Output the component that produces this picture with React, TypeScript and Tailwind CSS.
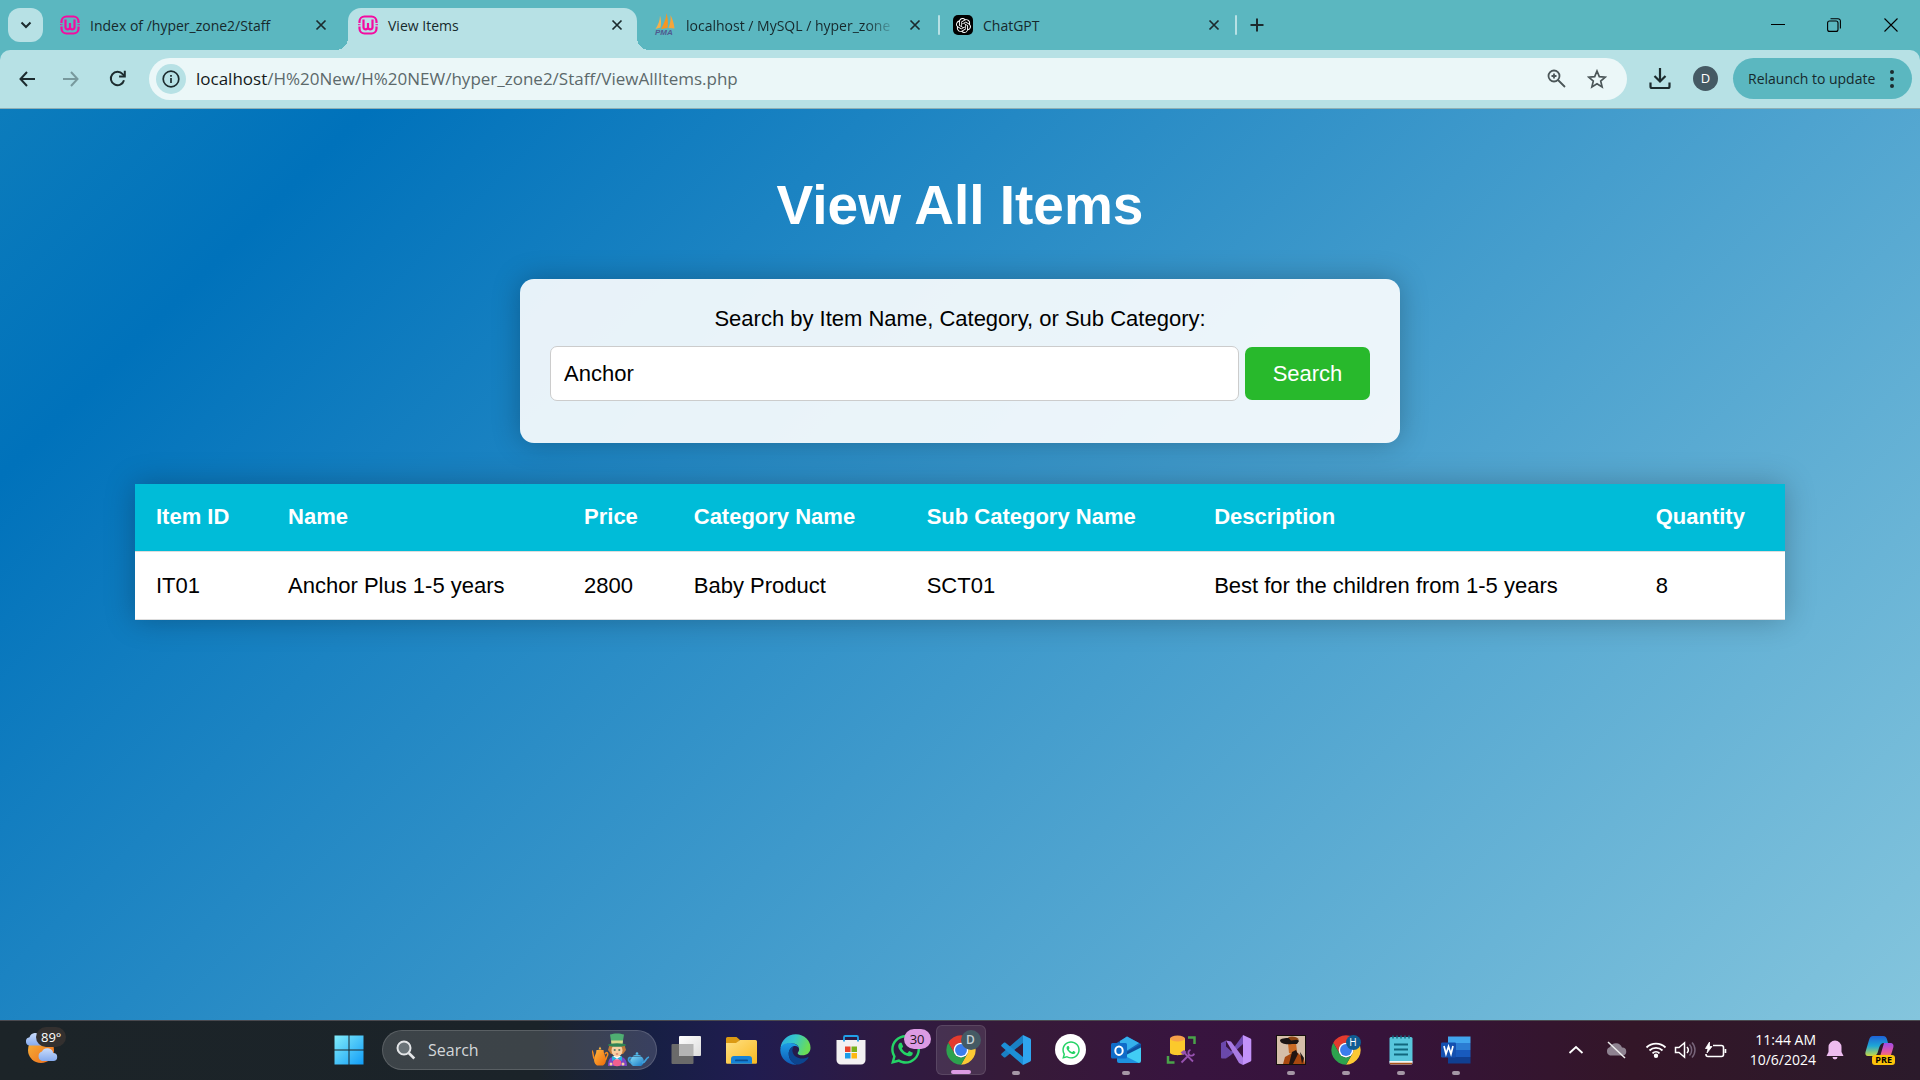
import React from "react";
import { FaWhatsapp } from "react-icons/fa";
import { SiOpenai } from "react-icons/si";

const UI = "font-['Open_Sans','Noto_Sans',sans-serif]";

function WampIcon() {
  return (
    <svg viewBox="0 0 20 20" className="size-5 shrink-0" fill="none" stroke="#f30ca0" strokeWidth="2.200">
      <path d="M1.500 8V6.500a5 5 0 0 1 5-5h7a5 5 0 0 1 5 5V8M1.500 11.500v2a5 5 0 0 0 5 5h7a5 5 0 0 0 5-5v-2" />
      <path d="M5.500 4.500v8a2.300 2.300 0 0 0 4.500 0V8M14.500 4.500v8a2.300 2.300 0 0 1-4.500 0" />
      <path d="M0 9.700h2.500M17.500 9.700H20" strokeWidth="1" />
    </svg>
  );
}

function PmaIcon() {
  return (
    <svg viewBox="0 0 22 26" className="h-[26px] w-[22px] shrink-0">
      <path d="M6 3.500C6 9 4 13 1.500 17l5-1.500C7.500 11 7 7 6 3.500z" fill="#f6b14c" />
      <path d="M12.500 1C12 8 9.500 12 7 17l6.500-1C14.500 10 13.500 5 12.500 1z" fill="#f79521" />
      <path d="M16.500 3c.5 5-.5 9-2 13l6 .5C20 11 18.500 7 16.500 3z" fill="#f6a53a" />
      <text x="1" y="23" fontSize="8" fontWeight="700" fontStyle="italic" fontFamily="Liberation Sans" fill="#4f5a8f">PMA</text>
    </svg>
  );
}

function GptIcon() {
  return (
    <span className="flex size-5 shrink-0 items-center justify-center rounded-[5px] bg-black">
      <SiOpenai className="size-[15px] text-white" />
    </span>
  );
}

function TabClose() {
  return (
    <button aria-label="Close tab" className="flex size-5 shrink-0 items-center justify-center">
      <svg viewBox="0 0 12 12" className="size-3" stroke="#1c2b2e" strokeWidth="1.700"><path d="M1.500 1.500l9 9M10.500 1.500l-9 9" /></svg>
    </button>
  );
}

function Tab({ icon, title, fade }: { icon: React.ReactNode; title: string; fade?: boolean }) {
  return (
    <div className="flex h-full w-[297px] shrink-0 items-center pr-[17px] pl-[9px]">
      {icon}
      <span className="ml-[10px] flex-1 whitespace-nowrap">
        <span className={fade ? "[mask-image:linear-gradient(to_right,black_88%,rgba(0,0,0,0.2))]" : ""}>{title}</span>
      </span>
      <TabClose />
    </div>
  );
}

function TabStrip() {
  return (
    <div className="flex h-[50px] items-center pl-2 text-[14px] text-[#16292c]">
      <button aria-label="Search tabs" className="flex h-[34px] w-[35px] items-center justify-center rounded-xl bg-[#b7e1e5]">
        <svg viewBox="0 0 12 8" className="h-2 w-3" fill="none" stroke="#1c2b2e" strokeWidth="2"><path d="M1.500 1.500L6 6l4.500-4.500" /></svg>
      </button>
      <div className="ml-2 h-full"><Tab icon={<WampIcon />} title="Index of /hyper_zone2/Staff" /></div>
      <div className="relative mt-2 h-[42px] w-[289px] rounded-t-[13px] bg-[#b7e1e5] before:absolute before:bottom-0 before:-left-3 before:size-3 before:bg-[radial-gradient(circle_at_0_0,transparent_12px,#b7e1e5_12px)] after:absolute after:-right-3 after:bottom-0 after:size-3 after:bg-[radial-gradient(circle_at_100%_0,transparent_12px,#b7e1e5_12px)]">
        <div className="flex h-full items-center pr-[10px] pb-2 pl-[10px]">
          <WampIcon />
          <span className="ml-[10px] flex-1">View Items</span>
          <TabClose />
        </div>
      </div>
      <div className="ml-2 h-full"><Tab icon={<PmaIcon />} title="localhost / MySQL / hyper_zone" fade /></div>
      <span className="-ml-1 h-5 w-[2px] rounded bg-[#b7e1e5]" />
      <div className="ml-1 h-full"><Tab icon={<GptIcon />} title="ChatGPT" /></div>
      <span className="-ml-[6px] h-5 w-[2px] rounded bg-[#b7e1e5]" />
      <button aria-label="New tab" className="ml-2 flex size-6 items-center justify-center">
        <svg viewBox="0 0 14 14" className="size-[14px]" stroke="#1c2b2e" strokeWidth="2"><path d="M7 .5v13M.5 7h13" /></svg>
      </button>
      <div className="ml-auto flex items-center">
        <button aria-label="Minimize" className="flex w-14 justify-center"><svg viewBox="0 0 14 14" className="size-[14px]" stroke="#000" strokeWidth="1"><path d="M0 6.500h14" /></svg></button>
        <button aria-label="Restore" className="flex w-14 justify-center"><svg viewBox="0 0 14 14" className="size-[14px]" stroke="#000" strokeWidth="1.100" fill="none"><rect x=".6" y="3" width="10.400" height="10.400" rx="2" /><path d="M3.500.7h7.500a2.400 2.400 0 0 1 2.400 2.400v7.400" /></svg></button>
        <button aria-label="Close" className="flex w-[58px] justify-center"><svg viewBox="0 0 14 14" className="size-[14px]" stroke="#000" strokeWidth="1.100"><path d="M.5.5l13 13M13.500.5l-13 13" /></svg></button>
      </div>
    </div>
  );
}

function Toolbar() {
  return (
    <div className="flex h-[59px] items-center rounded-t-[10px] border-b border-[#8fb0b5] bg-[#b7e1e5] pr-2 pb-px pl-[13px]">
      <button aria-label="Back" className="flex w-7 justify-center"><svg viewBox="0 0 16 16" className="size-4" fill="none" stroke="#1c2b2e" strokeWidth="2"><path d="M16 8H1.500M8 1L1.500 8 8 15" /></svg></button>
      <button aria-label="Forward" className="ml-4 flex w-7 justify-center"><svg viewBox="0 0 16 16" className="size-4" fill="none" stroke="#78999d" strokeWidth="2"><path d="M0 8h14.500M8 1l6.500 7L8 15" /></svg></button>
      <button aria-label="Reload" className="ml-[18px] flex w-7 justify-center"><svg viewBox="0 0 17 17" className="size-[17px]" fill="none" stroke="#1c2b2e" strokeWidth="2"><path d="M15 10.200A6.700 6.700 0 1 1 13.700 4.200L15.500 6" /><path d="M15.800.8v5.700h-5.700" /></svg></button>
      <div className="ml-[18px] flex h-[42px] flex-1 items-center rounded-full bg-[#ebf7f8] pr-5 pl-[7px]">
        <button aria-label="Site information" className="flex size-[30px] items-center justify-center rounded-full bg-[#b7e1e5]">
          <svg viewBox="0 0 18 18" className="size-[18px]" fill="none" stroke="#1c2b2e" strokeWidth="1.700"><circle cx="9" cy="9" r="7.800" /><path d="M9 8v5M9 5v1.700" /></svg>
        </button>
        <div className="ml-[10px] flex-1 text-[17px] text-[#5c696b]"><span className="text-[#14191a]">localhost</span>/H%20New/H%20NEW/hyper_zone2/Staff/ViewAllItems.php</div>
        <button aria-label="Zoom" className="mr-[21px]"><svg viewBox="0 0 19 19" className="size-[19px]" fill="none" stroke="#4b5658" strokeWidth="1.800"><circle cx="7" cy="7" r="5.500" /><path d="M11 11l7 7M4.500 7h5M7 4.500v5" /></svg></button>
        <button aria-label="Bookmark this tab"><svg viewBox="0 0 20 20" className="size-5" fill="none" stroke="#4b5658" strokeWidth="1.700"><path d="M10 2l2.300 5.600 6 .5-4.600 3.900 1.400 5.900L10 14.700 4.900 17.900l1.400-5.900L1.700 8.100l6-.5z" /></svg></button>
      </div>
      <button aria-label="Downloads" className="ml-[22px]"><svg viewBox="0 0 22 22" className="size-[22px]" fill="none" stroke="#1c2b2e" strokeWidth="2.200"><path d="M11 0v12.500M5.500 8l5.500 5.500L16.500 8M1.500 14.500v4c0 1 .5 1.500 1.500 1.500h16c1 0 1.500-.5 1.500-1.500v-4" /></svg></button>
      <button aria-label="Profile" className="ml-[22px] flex size-[25px] items-center justify-center rounded-full bg-[#455a64] text-[13px] text-white">D</button>
      <button className="ml-[15px] flex h-[41px] w-[179px] items-center justify-between rounded-full bg-[#5bb7c0] pr-[18px] pl-[15px] text-[14px] text-[#16292c]">
        Relaunch to update
        <svg viewBox="0 0 4 20" className="h-5 w-1" fill="#1c2b2e"><circle cx="2" cy="3" r="2" /><circle cx="2" cy="10" r="2" /><circle cx="2" cy="17" r="2" /></svg>
      </button>
    </div>
  );
}

const columns = ["Item ID", "Name", "Price", "Category Name", "Sub Category Name", "Description", "Quantity"];
const items = [["IT01", "Anchor Plus 1-5 years", "2800", "Baby Product", "SCT01", "Best for the children from 1-5 years", "8"]];

function Page() {
  return (
    <main className="flex flex-1 flex-col items-center bg-[linear-gradient(135deg,#0c7cbc_0%,#0072bb_13%,#84c5dd_100%)] px-7 font-['Liberation_Sans',Arial,sans-serif] text-[22px] leading-[25px] text-black">
      <h1 className="mt-[65px] text-[55px] leading-[63px] font-bold text-white">View All Items</h1>
      <form onSubmit={(e) => e.preventDefault()} className="mt-[42px] w-full max-w-[880px] rounded-[14px] bg-white/90 px-[30px] pt-[27px] pb-[42px] shadow-[0_0_28px_rgba(0,0,0,0.25)]">
        <label htmlFor="search" className="block text-center">Search by Item Name, Category, or Sub Category:</label>
        <div className="mt-[15px] flex items-center gap-[6px]">
          <input id="search" type="text" defaultValue="Anchor" className="h-[55px] min-w-0 flex-1 rounded-[7px] border border-[#ccc] bg-white px-[13px] outline-none" />
          <button type="submit" className="h-[53px] w-[125px] rounded-[7px] bg-[#28b92c] text-white">Search</button>
        </div>
      </form>
      <table className="mt-[41px] w-full max-w-[1650px] border-collapse bg-white text-left shadow-[0_0_28px_rgba(0,0,0,0.25)]">
        <thead>
          <tr className="bg-[#00bcd8] text-white">
            {columns.map((c) => <th key={c} className="border-b border-[#ddd] px-[21px] pt-5 pb-[22px] font-bold whitespace-nowrap">{c}</th>)}
          </tr>
        </thead>
        <tbody>
          {items.map((r) => (
            <tr key={r[0]}>{r.map((v, i) => <td key={i} className="border-b border-[#ddd] px-[21px] py-[21px]">{v}</td>)}</tr>
          ))}
        </tbody>
      </table>
    </main>
  );
}

function Weather() {
  return (
    <button aria-label="Weather" className="relative h-10 w-11">
      <svg viewBox="0 0 44 40" className="h-10 w-11">
        <defs>
          <linearGradient id="sun" x1="0" y1="0" x2="1" y2="1"><stop offset="0" stopColor="#f7b63a" /><stop offset="1" stopColor="#ee6a1c" /></linearGradient>
          <linearGradient id="cl" x1="0" y1="0" x2="0" y2="1"><stop offset="0" stopColor="#c9dcfb" /><stop offset="1" stopColor="#86abee" /></linearGradient>
        </defs>
        <circle cx="15" cy="20" r="13" fill="url(#sun)" />
        <path d="M3.500 15.500a4.200 4.200 0 0 1 0-8.300 6 6 0 0 1 11-1l1 9.300z" fill="url(#cl)" />
        <path d="M16 31a5 5 0 0 1 0-9.500 6 6 0 0 1 11.200 1.500 4 4 0 0 1 0 8z" fill="url(#cl)" />
      </svg>
      <span className="absolute -top-[3px] left-[10px] rounded-full bg-[#33302f] px-[5px] text-[13px] leading-5 text-white">89°</span>
    </button>
  );
}

function StartIcon() {
  return (
    <svg viewBox="0 0 30 30" className="size-[30px]">
      <defs><linearGradient id="win" gradientUnits="userSpaceOnUse" x1="0" y1="0" x2="30" y2="30"><stop offset="0" stopColor="#84eefb" /><stop offset="1" stopColor="#0f9bf6" /></linearGradient></defs>
      <path d="M.5.5h14v14h-14zM15.500.5h14v14h-14zM.5 15.500h14v14h-14zM15.500 15.500h14v14h-14z" fill="url(#win)" />
    </svg>
  );
}

function TeaParty() {
  return (
    <svg viewBox="0 0 58 34" className="h-[34px] w-[58px] shrink-0">
      <defs>
        <linearGradient id="tp1" x1="0" y1="0" x2="1" y2="1"><stop offset="0" stopColor="#ffb640" /><stop offset="1" stopColor="#ee6a08" /></linearGradient>
        <linearGradient id="tp2" x1="0" y1="0" x2="1" y2="1"><stop offset="0" stopColor="#7fd8f5" /><stop offset="1" stopColor="#1777c4" /></linearGradient>
      </defs>
      <path d="M8 13.500l1.500 3h-3z" fill="#ffb640" />
      <path d="M4.500 17h7c0 4 2.500 6 2.500 10 0 3-2 5-3 5.500H5c-1-.5-3-2.500-3-5.500 0-4 2.500-6 2.500-10z" fill="url(#tp1)" />
      <path d="M2.500 26C.5 24 2 20-.2 17.500M13 21c2-3 3.500-.5 2.200 2-.8 1.500-1 3-1.700 4" fill="none" stroke="#f58a1c" strokeWidth="1.500" />
      <path d="M16 33c0-6 2-9 5-9h8c3 0 6 3 6 9z" fill="#7b45c4" />
      <path d="M21 23h8l-4 6z" fill="#fff" />
      <path d="M25 25.500l-5-2.500v5zM25 25.500l5-2.500v5z" fill="#28b5e0" />
      <path d="M17.500 12h15l1.500 5-3 4H19l-3-4z" fill="#c07a38" />
      <ellipse cx="25" cy="17.500" rx="5.500" ry="6.200" fill="#f8cfa3" />
      <path d="M21.800 17h1.800M26.400 17h1.800" stroke="#356b52" strokeWidth="1.600" />
      <path d="M23.800 21h2.400" stroke="#c25e50" strokeWidth="1" />
      <path d="M18 1.500C22 0 28 0 32 1.500L30.500 11h-11z" fill="#4fae72" />
      <path d="M19.100 7.500H31l-.5 3.500h-11z" fill="#d8d68a" />
      <ellipse cx="25" cy="12" rx="9" ry="1.800" fill="#2f8456" />
      <ellipse cx="25" cy="29.800" rx="4.200" ry="3.500" fill="#f2608f" />
      <circle cx="19" cy="31" r="1.500" fill="#f8cfa3" /><circle cx="31" cy="31" r="1.500" fill="#f8cfa3" />
      <path d="M40 24h10c3 3 2 7-1 9h-8c-3-2-4-6-1-9z" fill="url(#tp2)" />
      <path d="M40.500 23.500c1-2.500 8-2.500 9 0z" fill="#52b9e8" /><circle cx="45" cy="20.500" r="1.300" fill="#52b9e8" />
      <path d="M50 30c4 0 3-5 7-6M40 25c-4-2-5 3-.5 5" fill="none" stroke="#3f9fdb" strokeWidth="1.700" />
    </svg>
  );
}

function ChromeIcon() {
  return (
    <svg viewBox="0 0 48 48" className="size-[30px]">
      <path d="M3.650 12.250A23.500 23.500 0 0 1 44.350 12.250H24A11.750 11.750 0 0 0 13.820 29.870z" fill="#e33b2e" />
      <path d="M44.350 12.250A23.500 23.500 0 0 1 24 47.500L34.180 29.870A11.750 11.750 0 0 0 24 12.250z" fill="#fcc934" />
      <path d="M24 47.500A23.500 23.500 0 0 1 3.650 12.250L13.820 29.870A11.750 11.750 0 0 0 34.180 29.870z" fill="#2da24e" />
      <circle cx="24" cy="24" r="11.800" fill="#fff" />
      <circle cx="24" cy="24" r="9.500" fill="#3b7ded" />
    </svg>
  );
}

function TaskViewIcon() {
  return (
    <svg viewBox="0 0 30 30" className="size-[30px]">
      <defs><linearGradient id="tv" x1="0" y1="0" x2="1" y2="1"><stop offset="0" stopColor="#fff" /><stop offset="1" stopColor="#dcdcdc" /></linearGradient></defs>
      <rect x=".5" y="9" width="22" height="20" rx="1" fill="#6a6a6a" />
      <rect x="8" y="1" width="22" height="20" rx="1" fill="url(#tv)" />
      <path d="M8 9h14.500v12H9a1 1 0 0 1-1-1z" fill="#b4b4b4" />
    </svg>
  );
}

function FolderIcon() {
  return (
    <svg viewBox="0 0 32 32" className="size-8">
      <defs><linearGradient id="fo" x1="0" y1="0" x2="1" y2="1"><stop offset="0" stopColor="#ffe083" /><stop offset="1" stopColor="#f9b920" /></linearGradient></defs>
      <path d="M1 4.500A1.500 1.500 0 0 1 2.500 3h9L15 6l-4 4H1z" fill="#dc9a13" />
      <path d="M1 9h10l4-3h15.500A1.500 1.500 0 0 1 32 7.500v21a1.200 1.200 0 0 1-1.200 1.200H2.200A1.200 1.200 0 0 1 1 28.500z" fill="url(#fo)" />
      <path d="M6 29.700V25a3 3 0 0 1 3-3h15a3 3 0 0 1 3 3v4.700z" fill="#1583d8" />
      <rect x="10" y="25.500" width="13" height="1.800" rx=".9" fill="#0a4f93" />
    </svg>
  );
}

function EdgeIcon() {
  return (
    <svg viewBox="0 0 256 256" className="size-[31px]">
      <defs>
        <linearGradient id="e1" x1="0" y1="0" x2="1" y2=".3"><stop offset="0" stopColor="#2aa9e6" /><stop offset=".5" stopColor="#36c8c9" /><stop offset="1" stopColor="#6bdc55" /></linearGradient>
        <linearGradient id="e2" x1="0" y1="0" x2="0" y2="1"><stop offset="0" stopColor="#1c9de6" /><stop offset="1" stopColor="#0f5ab4" /></linearGradient>
      </defs>
      <path d="M4 118C10 50 65 3 130 3c75 0 122 55 122 110 0 40-32 63-66 63-25 0-40-8-40-18 0-8 12-13 12-32 0-26-24-50-64-50-50 0-84 28-90 42z" fill="url(#e1)" />
      <path d="M3 126c3-35 41-52 82-51 45 1 73 26 73 52 0-20-22-33-42-27-28 8-44 36-44 64 0 45 30 80 70 88C70 262-4 200 3 126z" fill="url(#e2)" />
      <path d="M72 164c0-28 18-55 44-64-14 14-16 34-12 48 9 35 42 54 78 54 22 0 38-7 46-11 5-2 9 2 6 7-24 36-65 54-92 54-40-8-70-43-70-88z" fill="#0c458f" />
    </svg>
  );
}

function StoreIcon() {
  return (
    <svg viewBox="0 0 30 30" className="size-[30px]">
      <path d="M8 6V2.200A1.200 1.200 0 0 1 9.200 1h11.600A1.200 1.200 0 0 1 22 2.200V6" fill="none" stroke="#21a0e8" strokeWidth="1.800" />
      <path d="M.5 5h29v20a4.500 4.500 0 0 1-4.500 4.500H5A4.500 4.500 0 0 1 .5 25z" fill="#f3f1f2" />
      <path d="M9 11.500h5.500V17H9z" fill="#e8432b" /><path d="M15.500 11.500H21V17h-5.500z" fill="#79b11c" /><path d="M9 18h5.500v5.500H9z" fill="#1b9de8" /><path d="M15.500 18H21v5.500h-5.500z" fill="#fdb813" />
      <path d="M8 4.500v2M22 4.500v2" stroke="#21a0e8" strokeWidth="1.800" />
    </svg>
  );
}

function VsCodeIcon() {
  return (
    <svg viewBox="0 0 30 30" className="size-[30px]">
      <path d="M22 0v8L4.500 22.200c-.5.500-1.200.5-1.700 0L.6 20.300c-.6-.5-.6-1.300 0-1.800z" fill="#1a80c4" />
      <path d="M22 30v-8L4.500 7.800c-.5-.5-1.200-.5-1.700 0L.6 9.700c-.6.500-.6 1.300 0 1.800z" fill="#1c8fd6" />
      <path d="M22 0l6.800 3.200c.7.300 1.200 1 1.200 1.800v20c0 .8-.5 1.500-1.200 1.800L22 30z" fill="#2fa5ef" />
    </svg>
  );
}

function OutlookIcon() {
  return (
    <svg viewBox="0 0 32 30" className="h-[30px] w-8">
      <path d="M17 1.500L31 9v4L17 26 5 20V9z" fill="#1368bd" />
      <path d="M17 1.500L29 8 10 20V6z" fill="#35b1ec" />
      <path d="M31 9v4L11 25v-5z" fill="#0e4f9e" />
      <path d="M31 12.500V26a2 2 0 0 1-2 2H9l3-6z" fill="#41cdf5" />
      <path d="M7 17l22 11H9a2 2 0 0 1-2-2z" fill="#1d91e0" />
      <rect x="1" y="8" width="16" height="15.500" rx="1.500" fill="#0f6cc9" />
      <ellipse cx="9" cy="15.700" rx="3.700" ry="4.200" fill="none" stroke="#fff" strokeWidth="2" />
    </svg>
  );
}

function SsmsIcon() {
  return (
    <svg viewBox="0 0 30 30" className="size-[30px]">
      <path d="M4 3.500v14C4 21 19 21 19 17.500v-14z" fill="#fbc92c" />
      <ellipse cx="11.500" cy="3.500" rx="7.500" ry="3" fill="#f7a04a" />
      <path d="M22 2.500h6.500V9M2 21v6.500h6.500" fill="none" stroke="#4aa34a" strokeWidth="2.500" />
      <path d="M14.500 17.500l3.500-2.500 2.500 2-3 3z" fill="#9752b0" />
      <path d="M18.500 18l8.500 8.500M15.500 27.500l8-8" stroke="#9752b0" strokeWidth="1.800" />
      <path d="M24.500 14.800a3 3 0 1 0 3.700 3.800" fill="none" stroke="#9752b0" strokeWidth="1.800" />
    </svg>
  );
}

function VisualStudioIcon() {
  return (
    <svg viewBox="0 0 32 30" className="h-[30px] w-8">
      <path d="M1 8l5-2.500v6L12 17l-6 6.500L1.700 23.500A1.200 1.200 0 0 1 1 22.500z" fill="#6a48ab" />
      <path d="M6 23.500L23 0v9L11 20z" fill="#6f4cb3" />
      <path d="M6 5.500l5 1L23 22.500V30L19 28z" fill="#a97be4" />
      <path d="M23 0l7.500 3.500c.5.300.8.700.8 1.200v20.600c0 .5-.3 1-.8 1.200L23 30z" fill="#c392fa" />
    </svg>
  );
}

function PortraitIcon() {
  return (
    <svg viewBox="0 0 30 30" className="size-[30px]">
      <rect x=".5" y=".5" width="29" height="29" fill="#d5bea8" stroke="#15100d" />
      <path d="M7 29l2-7 7-4 6 0 6 6 1 5z" fill="#a8480f" />
      <path d="M12 8h8l1 8-3 4-5-2z" fill="#c96a24" />
      <path d="M4 5c2-2 7-2 11-2 4 0 7 1 8 3l-2 3-5 0c-5 1-12 0-12-4z" fill="#1a1413" />
      <path d="M12 2.500c3-2 9-1 11 2l-8 1z" fill="#8b4413" />
      <path d="M16 17l4-2 2 4-5 10h-4zM24 17l4 6-2 6z" fill="#211512" />
    </svg>
  );
}

function NotepadIcon() {
  return (
    <svg viewBox="0 0 24 30" className="h-[30px] w-6">
      <rect x=".5" y="2" width="23" height="26" rx="1.500" fill="#58c6dc" />
      <path d="M.5 26h23v2a1.500 1.500 0 0 1-1.500 1.500H2A1.500 1.500 0 0 1 .5 28z" fill="#f3f3f3" />
      <path d="M1 28.500h22" stroke="#a85519" strokeWidth="1.500" />
      <path d="M4 .5v3M8 .5v3M12 .5v3M16 .5v3M20 .5v3" stroke="#156a80" strokeWidth="1.500" />
      <path d="M5 9.500h14M5 14.500h14M5 19.500h14" stroke="#11677d" strokeWidth="1.800" />
    </svg>
  );
}

function WordIcon() {
  return (
    <svg viewBox="0 0 30 28" className="h-7 w-[30px]">
      <path d="M7 .5h22.500V7H7z" fill="#41a5ee" /><path d="M7 7h22.500v7H7z" fill="#2b7cd3" /><path d="M7 14h22.500v7H7z" fill="#185abd" /><path d="M7 21h22.500v6.500H7z" fill="#103f91" />
      <rect x="0" y="6.500" width="15" height="15" rx="1.200" fill="#1450b0" />
      <path d="M3 10l2 8 2.500-7.500L10 18l2-8" fill="none" stroke="#fff" strokeWidth="1.700" />
    </svg>
  );
}

type TaskbarApp = { name: string; icon: React.ReactNode; active?: boolean; running?: boolean; badge?: React.ReactNode };

const apps: TaskbarApp[] = [
  { name: "Task view", icon: <TaskViewIcon /> },
  { name: "File Explorer", icon: <FolderIcon /> },
  { name: "Edge", icon: <EdgeIcon /> },
  { name: "Store", icon: <StoreIcon /> },
  { name: "WhatsApp", icon: <FaWhatsapp className="size-[33px] text-[#25d366]" />, badge: <span className="absolute top-1 right-0 rounded-full bg-[#dc9be4] px-[6px] text-[13px] leading-5 text-[#1c1420]">30</span> },
  { name: "Chrome", icon: <ChromeIcon />, active: true, badge: <span className="absolute top-1 right-1 flex size-5 items-center justify-center rounded-full bg-[#455a64] text-[12px] font-semibold text-[#c5d0d4]">D</span> },
  { name: "VS Code", icon: <VsCodeIcon />, running: true },
  { name: "WhatsApp Web", icon: <span className="flex size-[31px] items-center justify-center rounded-full bg-white"><FaWhatsapp className="size-5 text-[#25d366]" /></span> },
  { name: "Outlook", icon: <OutlookIcon />, running: true },
  { name: "SQL Server", icon: <SsmsIcon /> },
  { name: "Visual Studio", icon: <VisualStudioIcon /> },
  { name: "Portrait", icon: <PortraitIcon />, running: true },
  { name: "Chrome H", icon: <ChromeIcon />, running: true, badge: <span className="absolute top-[10px] right-[10px] flex size-[15px] items-center justify-center rounded-full bg-[#0f5c93] text-[10px] text-white">H</span> },
  { name: "Notepad", icon: <NotepadIcon />, running: true },
  { name: "Word", icon: <WordIcon />, running: true },
];

function AppButton({ app }: { app: TaskbarApp }) {
  return (
    <div className="flex w-[55px] justify-center">
      <button aria-label={app.name} className={app.active ? "relative flex size-[50px] items-center justify-center rounded-md border border-white/10 bg-white/10" : "relative flex size-[50px] items-center justify-center"}>
        {app.icon}
        {app.badge}
        {app.active && <span className="absolute bottom-0 h-1 w-5 rounded-full bg-[#dc9be4]" />}
        {app.running && <span className="absolute bottom-0 h-1 w-2 rounded-full bg-[#a597a6]" />}
      </button>
    </div>
  );
}

function Tray() {
  return (
    <div className="ml-auto flex items-center text-white">
      <button aria-label="Show hidden icons"><svg viewBox="0 0 16 10" className="h-[10px] w-4" fill="none" stroke="#fff" strokeWidth="1.800"><path d="M1.500 8L8 2l6.500 6" /></svg></button>
      <svg viewBox="0 0 22 18" className="ml-[21px] h-[18px] w-[22px]"><path d="M5 14.500A4.500 4.500 0 0 1 5 6a6.500 6.500 0 0 1 12 .5 4 4 0 0 1 .5 8z" fill="#8e8290" /><path d="M3 1l17 16" stroke="#eee" strokeWidth="1.500" /></svg>
      <svg viewBox="0 0 22 17" className="ml-[18px] h-[17px] w-[22px]" fill="none" stroke="#fff" strokeWidth="1.800"><path d="M1.500 6.500a13.400 13.400 0 0 1 19 0M4.500 9.500a9.200 9.200 0 0 1 13 0M7.500 12.300a5 5 0 0 1 7 0" /><circle cx="11" cy="14.800" r="1.300" fill="#fff" /></svg>
      <svg viewBox="0 0 22 18" className="ml-[7px] h-[18px] w-[22px]" fill="none" stroke="#fff" strokeWidth="1.500"><path d="M1.500 6.500H5l5.500-4.700v14.400L5 11.500H1.500z" /><path d="M13 6a4.500 4.500 0 0 1 0 6" /><path d="M15.500 3.500a8 8 0 0 1 0 11M18 1.500a11 11 0 0 1 0 15" stroke="#77657a" /></svg>
      <svg viewBox="0 0 23 18" className="ml-2 h-[18px] w-[23px]" fill="none" stroke="#fff" strokeWidth="1.600"><path d="M9 4.500h8.500a2 2 0 0 1 2 2v7a2 2 0 0 1-2 2H4a2 2 0 0 1-2-2V13M21.500 8v4" /><path d="M5.500 1L1.500 7.500H4L3 12l5-6.500H5.500z" fill="#fff" strokeWidth=".8" /></svg>
      <div className="ml-4 w-[73px] text-right text-[14px] leading-5 whitespace-nowrap">
        <div>11:44 AM</div>
        <div>10/6/2024</div>
      </div>
      <svg viewBox="0 0 18 20" className="ml-[10px] h-5 w-[18px]" fill="#eebcf0"><path d="M9 .5a6.500 6.500 0 0 1 6.500 6.500v5l2 4H.5l2-4V7A6.500 6.500 0 0 1 9 .5zM6.500 17h5a2.500 2.500 0 0 1-5 0z" /></svg>
      <button aria-label="Copilot" className="relative ml-[21px] h-[30px] w-[30px]">
        <svg viewBox="0 0 30 30" className="size-[30px]">
          <defs>
            <linearGradient id="c1" x1="0" y1="0" x2="0" y2="1"><stop offset="0" stopColor="#1e62d8" /><stop offset=".5" stopColor="#1ea7d6" /><stop offset="1" stopColor="#c9d943" /></linearGradient>
            <linearGradient id="c2" x1="0" y1="0" x2="0" y2="1"><stop offset="0" stopColor="#a04be8" /><stop offset=".6" stopColor="#e658a0" /><stop offset="1" stopColor="#f98a3c" /></linearGradient>
          </defs>
          <path d="M8 1h10c2.500 0 3.500 1.500 4.200 4l.8 3h-4c-3 0-4 2-5 5l-1.500 5c-1 2-2 3-4.500 3H3c-2.500 0-3-2-2.500-4L4 5c.8-2.500 2-4 4-4z" fill="url(#c1)" />
          <path d="M19 8h6c3 0 4 2 3.300 4.500L26 20c-.8 2-2 3-4.500 3h-9c2 0 2.500-1.500 3-3z" fill="url(#c2)" />
        </svg>
        <span className="absolute right-0 bottom-0 rounded-[3px] bg-[#fcc30a] px-[3px] text-[9px] leading-[10px] font-bold text-black">PRE</span>
      </button>
    </div>
  );
}

function Taskbar() {
  return (
    <footer className="flex h-[60px] items-center border-t border-[#4a4a50] bg-[linear-gradient(90deg,#1c2428_0%,#1b2329_28%,#171f44_34%,#201c50_39%,#2f1a42_46%,#361a38_53%,#38143f_62%,#36133a_72%,#331628_85%,#2b1a2b_100%)] pr-[25px] pb-[2px] pl-[26px]">
      <Weather />
      <button aria-label="Start" className="ml-[264px]"><StartIcon /></button>
      <label className="ml-[18px] flex h-10 w-[275px] items-center rounded-full border border-white/15 bg-white/15 pr-[6px] pl-[13px]">
        <svg viewBox="0 0 20 20" className="size-5 shrink-0" fill="#6a7378" stroke="#e4e6e8" strokeWidth="2"><circle cx="8" cy="8" r="6.500" /><path d="M12.800 13l5.500 5.500" strokeWidth="2.600" /></svg>
        <input aria-label="Search" placeholder="Search" className="ml-3 min-w-0 flex-1 bg-transparent text-[16px] text-white outline-none placeholder:text-[#d3d7da]" />
        <TeaParty />
      </label>
      <nav className="ml-px flex">{apps.map((a) => <AppButton key={a.name} app={a} />)}</nav>
      <Tray />
    </footer>
  );
}

export default function App() {
  return (
    <div className={`flex min-h-screen flex-col ${UI}`}>
      <header className="bg-[#5bb7c0]">
        <TabStrip />
        <Toolbar />
      </header>
      <Page />
      <Taskbar />
    </div>
  );
}
